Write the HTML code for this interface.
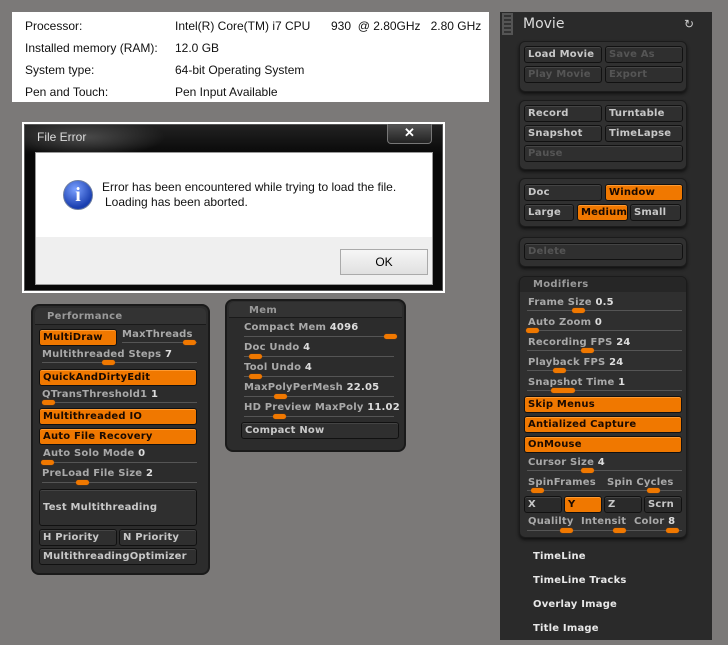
<!DOCTYPE html>
<html><head><meta charset="utf-8"><style>
*{margin:0;padding:0;box-sizing:border-box}
body{width:728px;height:645px;background:#7b7978;position:relative;overflow:hidden;font-family:"Liberation Sans",sans-serif}
.a{position:absolute}
.t{position:absolute;font-size:12px;color:#111;white-space:nowrap}
.z{position:absolute;font-family:"DejaVu Sans","Liberation Sans",sans-serif;font-weight:bold;font-size:10px;letter-spacing:0.2px;color:#a9a9a9;white-space:nowrap;line-height:12px}
.b{position:absolute;background:#2f2f2f;border:1px solid #111;border-radius:3px;box-shadow:inset 0 1px 0 #444;font-family:"DejaVu Sans","Liberation Sans",sans-serif;font-weight:bold;font-size:10px;letter-spacing:0.2px;color:#c8c8c8;padding-left:3px;line-height:15px;white-space:nowrap}
.o{background:#f07800;color:#1a0a00;box-shadow:inset 0 1px 0 #ff9a30}
.d{color:#555}
.k{position:absolute;width:13px;height:5px;background:#f07800;border-radius:3px;box-shadow:0 0 1px #b05000}
.l{position:absolute;height:1px;background:#555}
.p{position:absolute;background:#2c2c2c;border-radius:6px;box-shadow:0 0 0 2px #1a1a1a}
.g{position:absolute;background:#303030;border:1px solid #1b1b1b;border-radius:6px;box-shadow:0 2px 3px #111}
.h{position:absolute;font-family:"DejaVu Sans","Liberation Sans",sans-serif;font-weight:bold;font-size:10px;color:#9a9a9a;letter-spacing:0.3px}
</style></head><body>

<div class="a" style="left:12px;top:12px;width:477px;height:90px;background:#fff"></div>
<div class="t" style="left:25px;top:19px">Processor:</div>
<div class="t" style="left:175px;top:19px">Intel(R) Core(TM) i7 CPU</div>
<div class="t" style="left:331px;top:19px">930 &nbsp;@ 2.80GHz &nbsp;&nbsp;2.80 GHz</div>
<div class="t" style="left:25px;top:41px">Installed memory (RAM):</div>
<div class="t" style="left:175px;top:41px">12.0 GB</div>
<div class="t" style="left:25px;top:63px">System type:</div>
<div class="t" style="left:175px;top:63px">64-bit Operating System</div>
<div class="t" style="left:25px;top:85px">Pen and Touch:</div>
<div class="t" style="left:175px;top:85px">Pen Input Available</div>

<div class="a" style="left:22px;top:122px;width:423px;height:171px;background:#fff"></div>
<div class="a" style="left:24px;top:124px;width:419px;height:167px;background:radial-gradient(ellipse 80px 20px at 60px 12px,#4a4a4a,transparent),linear-gradient(#222,#080808 30px);border:1px solid #555"></div>
<div class="t" style="left:37px;top:130px;color:#ddd;font-size:12px">File Error</div>
<div class="a" style="left:387px;top:124px;width:45px;height:20px;border:1px solid #777;border-top:none;border-radius:0 0 4px 4px;background:linear-gradient(#555,#222);color:#fff;font-weight:bold;font-size:13px;text-align:center;line-height:18px">✕</div>
<div class="a" style="left:35px;top:152px;width:398px;height:133px;background:#fff;border:1px solid #999"></div>
<div class="a" style="left:36px;top:237px;width:396px;height:47px;background:#efefef"></div>
<div class="a" style="left:63px;top:180px;width:30px;height:30px;border-radius:50%;background:radial-gradient(circle at 40% 30%,#7aa0ff,#1a3fb0 70%);border:1px solid #6f7fa0;color:#fff;font:bold 20px 'Liberation Serif',serif;text-align:center;line-height:29px">i</div>
<div class="t" style="left:102px;top:180px;font-size:12px">Error has been encountered while trying to load the file.</div>
<div class="t" style="left:105px;top:195px;font-size:12px">Loading has been aborted.</div>
<div class="a" style="left:340px;top:249px;width:88px;height:26px;border:1px solid #aaa;background:linear-gradient(#f6f6f6,#e0e0e0);font-size:12px;text-align:center;line-height:24px">OK</div>

<div class="p" style="left:33px;top:306px;width:175px;height:267px"></div>
<div class="a" style="left:35px;top:308px;width:171px;height:17px;background:#333;border-radius:5px 5px 0 0;border-bottom:1px solid #1a1a1a"></div>
<div class="h" style="left:47px;top:311px">Performance</div>
<div class="b o" style="left:39px;top:329px;width:78px;height:17px">MultiDraw</div>
<div class="z" style="left:122px;top:329px">MaxThreads</div>
<div class="l" style="left:122px;top:342px;width:75px"></div><div class="k" style="left:183px;top:340px"></div>
<div class="z" style="left:42px;top:349px">Multithreaded Steps <span style="color:#ddd">7</span></div>
<div class="l" style="left:42px;top:362px;width:155px"></div><div class="k" style="left:102px;top:360px"></div>
<div class="b o" style="left:39px;top:369px;width:158px;height:17px">QuickAndDirtyEdit</div>
<div class="z" style="left:42px;top:389px">QTransThreshold1 <span style="color:#ddd">1</span></div>
<div class="l" style="left:42px;top:402px;width:155px"></div><div class="k" style="left:42px;top:400px"></div>
<div class="b o" style="left:39px;top:408px;width:158px;height:17px">Multithreaded IO</div>
<div class="b o" style="left:39px;top:428px;width:158px;height:17px">Auto File Recovery</div>
<div class="z" style="left:43px;top:448px">Auto Solo Mode <span style="color:#ddd">0</span></div>
<div class="l" style="left:42px;top:462px;width:155px"></div><div class="k" style="left:41px;top:460px"></div>
<div class="z" style="left:42px;top:468px">PreLoad File Size <span style="color:#ddd">2</span></div>
<div class="l" style="left:42px;top:482px;width:155px"></div><div class="k" style="left:76px;top:480px"></div>
<div class="b" style="left:39px;top:489px;width:158px;height:37px;line-height:35px">Test Multithreading</div>
<div class="b" style="left:39px;top:529px;width:78px;height:17px">H Priority</div>
<div class="b" style="left:119px;top:529px;width:78px;height:17px">N Priority</div>
<div class="b" style="left:39px;top:548px;width:158px;height:17px">MultithreadingOptimizer</div>

<div class="p" style="left:227px;top:301px;width:177px;height:149px"></div>
<div class="a" style="left:229px;top:302px;width:173px;height:16px;background:#333;border-radius:5px 5px 0 0;border-bottom:1px solid #1a1a1a"></div>
<div class="h" style="left:249px;top:305px">Mem</div>
<div class="z" style="left:244px;top:322px">Compact Mem <span style="color:#ddd">4096</span></div>
<div class="l" style="left:244px;top:336px;width:150px"></div><div class="k" style="left:384px;top:334px"></div>
<div class="z" style="left:244px;top:342px">Doc Undo <span style="color:#ddd">4</span></div>
<div class="l" style="left:244px;top:356px;width:150px"></div><div class="k" style="left:249px;top:354px"></div>
<div class="z" style="left:244px;top:362px">Tool Undo <span style="color:#ddd">4</span></div>
<div class="l" style="left:244px;top:376px;width:150px"></div><div class="k" style="left:249px;top:374px"></div>
<div class="z" style="left:244px;top:382px">MaxPolyPerMesh <span style="color:#ddd">22.05</span></div>
<div class="l" style="left:244px;top:396px;width:150px"></div><div class="k" style="left:274px;top:394px"></div>
<div class="z" style="left:244px;top:402px">HD Preview MaxPoly <span style="color:#ddd">11.02</span></div>
<div class="l" style="left:244px;top:416px;width:150px"></div><div class="k" style="left:273px;top:414px"></div>
<div class="b" style="left:241px;top:422px;width:158px;height:17px">Compact Now</div>

<div class="a" style="left:500px;top:12px;width:212px;height:628px;background:#2a2a2a"></div>
<div class="a" style="left:502px;top:13px;width:11px;height:22px;border-left:2px solid #555;border-right:2px solid #555;background:repeating-linear-gradient(#555 0 2px,#333 2px 4px)"></div>
<div class="a" style="left:523px;top:16px;font-size:14px;color:#ddd;font-family:'DejaVu Sans',sans-serif">Movie</div>
<div class="a" style="left:684px;top:17px;color:#ccc;font-size:12px">↻</div>

<div class="g" style="left:519px;top:41px;width:168px;height:51px"></div>
<div class="b" style="left:524px;top:46px;width:78px;height:17px">Load Movie</div>
<div class="b d" style="left:605px;top:46px;width:78px;height:17px">Save As</div>
<div class="b d" style="left:524px;top:66px;width:78px;height:17px">Play Movie</div>
<div class="b d" style="left:605px;top:66px;width:78px;height:17px">Export</div>

<div class="g" style="left:519px;top:100px;width:168px;height:70px"></div>
<div class="b" style="left:524px;top:105px;width:78px;height:17px">Record</div>
<div class="b" style="left:605px;top:105px;width:78px;height:17px">Turntable</div>
<div class="b" style="left:524px;top:125px;width:78px;height:17px">Snapshot</div>
<div class="b" style="left:605px;top:125px;width:78px;height:17px">TimeLapse</div>
<div class="b d" style="left:524px;top:145px;width:159px;height:17px">Pause</div>

<div class="g" style="left:519px;top:178px;width:168px;height:49px"></div>
<div class="b" style="left:524px;top:184px;width:78px;height:17px">Doc</div>
<div class="b o" style="left:605px;top:184px;width:78px;height:17px">Window</div>
<div class="b" style="left:524px;top:204px;width:50px;height:17px">Large</div>
<div class="b o" style="left:577px;top:204px;width:51px;height:17px">Medium</div>
<div class="b" style="left:630px;top:204px;width:51px;height:17px">Small</div>

<div class="g" style="left:519px;top:237px;width:168px;height:30px"></div>
<div class="b d" style="left:524px;top:243px;width:159px;height:17px">Delete</div>

<div class="g" style="left:519px;top:276px;width:168px;height:262px;background:#2f2f2f"></div>
<div class="a" style="left:520px;top:277px;width:166px;height:15px;background:#262626;border-radius:5px 5px 0 0"></div>
<div class="h" style="left:533px;top:279px">Modifiers</div>
<div class="z" style="left:528px;top:297px">Frame Size <span style="color:#ddd">0.5</span></div>
<div class="l" style="left:527px;top:310px;width:155px"></div><div class="k" style="left:572px;top:308px"></div>
<div class="z" style="left:528px;top:317px">Auto Zoom <span style="color:#ddd">0</span></div>
<div class="l" style="left:527px;top:330px;width:155px"></div><div class="k" style="left:526px;top:328px"></div>
<div class="z" style="left:528px;top:337px">Recording FPS <span style="color:#ddd">24</span></div>
<div class="l" style="left:527px;top:350px;width:155px"></div><div class="k" style="left:581px;top:348px"></div>
<div class="z" style="left:528px;top:357px">Playback FPS <span style="color:#ddd">24</span></div>
<div class="l" style="left:527px;top:370px;width:155px"></div><div class="k" style="left:553px;top:368px"></div>
<div class="z" style="left:528px;top:377px">Snapshot Time <span style="color:#ddd">1</span></div>
<div class="l" style="left:527px;top:390px;width:155px"></div><div class="k" style="left:551px;top:388px;width:24px"></div>
<div class="b o" style="left:524px;top:396px;width:158px;height:17px">Skip Menus</div>
<div class="b o" style="left:524px;top:416px;width:158px;height:17px">Antialized Capture</div>
<div class="b o" style="left:524px;top:436px;width:158px;height:17px">OnMouse</div>
<div class="z" style="left:528px;top:457px">Cursor Size <span style="color:#ddd">4</span></div>
<div class="l" style="left:527px;top:470px;width:155px"></div><div class="k" style="left:581px;top:468px"></div>
<div class="z" style="left:528px;top:477px">SpinFrames</div>
<div class="z" style="left:607px;top:477px">Spin Cycles</div>
<div class="l" style="left:527px;top:490px;width:155px"></div><div class="k" style="left:531px;top:488px"></div><div class="k" style="left:647px;top:488px"></div>
<div class="b" style="left:524px;top:496px;width:38px;height:17px;background:#2a2a2a">X</div>
<div class="b o" style="left:564px;top:496px;width:38px;height:17px">Y</div>
<div class="b" style="left:604px;top:496px;width:38px;height:17px;background:#2a2a2a">Z</div>
<div class="b" style="left:644px;top:496px;width:38px;height:17px;background:#2a2a2a">Scrn</div>
<div class="z" style="left:528px;top:516px">Qualilty</div>
<div class="z" style="left:581px;top:516px">Intensit</div>
<div class="z" style="left:634px;top:516px">Color <span style="color:#ddd">8</span></div>
<div class="l" style="left:527px;top:530px;width:155px"></div><div class="k" style="left:560px;top:528px"></div><div class="k" style="left:613px;top:528px"></div><div class="k" style="left:666px;top:528px"></div>

<div class="z" style="left:533px;top:551px;color:#e8e8e8">TimeLine</div>
<div class="z" style="left:533px;top:575px;color:#e8e8e8">TimeLine Tracks</div>
<div class="z" style="left:533px;top:599px;color:#e8e8e8">Overlay Image</div>
<div class="z" style="left:533px;top:623px;color:#e8e8e8">Title Image</div>
</body></html>
